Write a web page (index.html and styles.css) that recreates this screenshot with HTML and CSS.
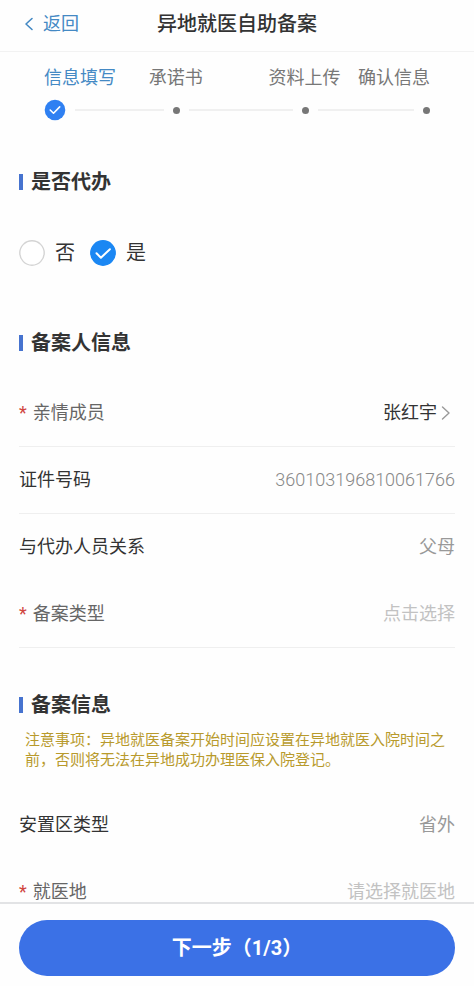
FILE: index.html
```html
<!DOCTYPE html>
<html lang="zh-CN">

<head>
    <meta charset="UTF-8">
    <meta name="viewport" content="width=device-width, initial-scale=1.0">
    <title>异地就医自助备案</title>
    <link rel="stylesheet" href="styles.css">
</head>

<body>
    <form class="page">
        <header class="header">
            <a class="back" href="#">
                <svg class="back-icon" viewBox="0 0 10 14" width="10" height="14" aria-hidden="true">
                    <path d="M8 1.5 2 7l6 5.5" />
                </svg>
                返回
            </a>
            <h1>异地就医自助备案</h1>
        </header>

        <main class="content">
            <div class="steps">
                <ol class="step-names">
                    <li class="active" aria-current="step">信息填写</li>
                    <li>承诺书</li>
                    <li>资料上传</li>
                    <li>确认信息</li>
                </ol>
                <div class="track" aria-hidden="true">
                    <svg class="track-check" viewBox="0 0 22 22" width="22" height="22">
                        <circle cx="11" cy="11" r="10.3" />
                        <path d="m6.2 11 3.3 3.2 6.2-6.3" />
                    </svg>
                    <span class="line"></span>
                    <span class="dot"></span>
                    <span class="line"></span>
                    <span class="dot"></span>
                    <span class="line"></span>
                    <span class="dot"></span>
                </div>
            </div>

            <section class="section">
                <h2 id="agentTitle">是否代办</h2>
                <div class="radios" role="radiogroup" aria-labelledby="agentTitle">
                    <label class="radio">
                        <input type="radio" name="agent" value="no">
                        <svg class="radio-icon" viewBox="0 0 26 26" width="26" height="26" aria-hidden="true">
                            <circle cx="13" cy="13" r="12.2" />
                            <path d="m6.5 13.2 4.4 4.5 9-8.5" />
                        </svg>
                        否
                    </label>
                    <label class="radio">
                        <input type="radio" name="agent" value="yes" checked>
                        <svg class="radio-icon" viewBox="0 0 26 26" width="26" height="26" aria-hidden="true">
                            <circle cx="13" cy="13" r="12.2" />
                            <path d="m6.5 13.2 4.4 4.5 9-8.5" />
                        </svg>
                        是
                    </label>
                </div>
            </section>

            <section class="section">
                <h2>备案人信息</h2>
                <div class="rows">
                    <div class="row line-below">
                        <label class="required" for="member">亲情成员</label>
                        <button class="value picked" type="button" id="member">张红宇
                            <svg class="more-icon" viewBox="0 0 10 16" width="10" height="16" aria-hidden="true">
                                <path d="m1.5 2 6.5 6-6.5 6" />
                            </svg>
                        </button>
                    </div>
                    <div class="row line-below">
                        <label for="idNumber">证件号码</label>
                        <output class="value number" id="idNumber">360103196810061766</output>
                    </div>
                    <div class="row">
                        <label for="relation">与代办人员关系</label>
                        <output class="value" id="relation">父母</output>
                    </div>
                    <div class="row line-below">
                        <label class="required" for="recordType">备案类型</label>
                        <button class="value empty" type="button" id="recordType">点击选择</button>
                    </div>
                </div>
            </section>

            <section class="section">
                <h2>备案信息</h2>
                <p class="note">注意事项：异地就医备案开始时间应设置在异地就医入院时间之前，否则将无法在异地成功办理医保入院登记。</p>
                <div class="rows">
                    <div class="row">
                        <label for="areaType">安置区类型</label>
                        <output class="value" id="areaType">省外</output>
                    </div>
                    <div class="row">
                        <label class="required" for="place">就医地</label>
                        <button class="value empty" type="button" id="place">请选择就医地</button>
                    </div>
                </div>
            </section>
        </main>

        <footer class="footer">
            <button class="next" type="submit">下一步（1/3）</button>
        </footer>
    </form>
</body>

</html>
```
FILE: styles.css
```css
* {
    box-sizing: border-box;
}

body {
    margin: 0;
    background-color: #fefefe;
    color: #333;
    font-family: Roboto, "Noto Sans CJK SC", sans-serif;
    font-size: 18px;
    line-height: 24px;
}

h1, h2, p, ol {
    margin: 0;
    padding: 0;
}

button {
    padding: 0;
    border: none;
    background: none;
    color: inherit;
    font: inherit;
    cursor: pointer;
}

svg {
    fill: none;
    stroke-linecap: round;
    stroke-linejoin: round;
}

.page {
    display: flex;
    flex-direction: column;
    height: 100vh;
}

/* Top bar */
.header {
    display: grid;
    grid-template-columns: 1fr auto 1fr;
    align-items: center;
    padding: 9px 24px 12px;
    border-bottom: 1px solid #f2f2f2;
}

.header h1 {
    font-size: 20px;
    font-weight: 500;
    line-height: 30px;
}

.back {
    display: flex;
    align-items: center;
    gap: 9px;
    color: #4489c4;
    text-decoration: none;
}

.back-icon {
    stroke: #4489c4;
    stroke-width: 1.6;
}

/* Scrolling part between top bar and button */
.content {
    flex: 1;
    min-height: 0;
    overflow-y: auto;
    scrollbar-width: none;
}

.steps {
    padding: 14px 44px 4px;
}

.step-names {
    display: grid;
    grid-template-columns: minmax(0, 11fr) 21fr 21fr minmax(0, 10fr);
    justify-items: center;
    list-style: none;
    color: #777;
    white-space: nowrap;
}

.step-names li:first-child {
    justify-self: start;
}

.step-names li:last-child {
    justify-self: end;
}

.step-names .active {
    color: #4489c4;
}

.track {
    display: grid;
    grid-template-columns: auto 14fr auto 16fr auto 15fr auto;
    align-items: center;
    margin-top: 9px;
}

.track-check circle {
    fill: #2f80f2;
}

.track-check path {
    stroke: #fff;
    stroke-width: 1.6;
}

.line {
    height: 2px;
    margin: 0 9px;
    background-color: #f0f0f0;
}

.dot {
    width: 7px;
    height: 7px;
    border-radius: 50%;
    background-color: #777;
}

/* Form sections */
.section {
    margin-top: 42px;
    padding: 0 19px;
}

.section h2 {
    display: flex;
    align-items: center;
    gap: 8px;
    font-size: 20px;
    font-weight: bold;
    line-height: 30px;
}

.section h2::before {
    content: "";
    width: 4px;
    height: 16px;
    background-color: #4673cf;
}

.radios {
    display: flex;
    align-items: center;
    gap: 15px;
    height: 67px;
    margin-top: 22px;
    font-size: 20px;
}

.radio {
    display: flex;
    align-items: center;
    gap: 10px;
}

.radio input {
    position: absolute;
    opacity: 0;
}

.radio-icon circle {
    fill: #fff;
    stroke: #d4d4d4;
    stroke-width: 1.4;
}

.radio-icon path {
    stroke: none;
    stroke-width: 2;
}

.radio input:checked + .radio-icon circle {
    fill: #1b87f3;
    stroke: #1b87f3;
}

.radio input:checked + .radio-icon path {
    stroke: #fff;
}

.rows {
    margin-top: 22px;
}

.row {
    display: flex;
    justify-content: space-between;
    align-items: center;
    height: 67px;
    border-bottom: 1px solid transparent;
}

.line-below {
    border-bottom-color: #efefef;
}

.required {
    color: #666;
}

.required::before {
    content: "*";
    margin-right: 6px;
    color: #d0453f;
}

.value {
    display: flex;
    align-items: center;
    color: #999;
}

.number {
    color: #888;
    font-weight: 300;
}

.picked {
    gap: 4px;
    padding-right: 4px;
    color: #333;
}

.more-icon {
    stroke: #999;
    stroke-width: 1.4;
}

.empty {
    color: #c2c2c2;
}

.note {
    margin-top: 10px;
    padding: 0 4px 0 6px;
    color: #b89a2c;
    font-size: 15px;
    line-height: 20px;
}

/* Bottom button */
.footer {
    padding: 16px 19px 10px;
    border-top: 2px solid #e2e3e5;
}

.next {
    width: 100%;
    height: 56px;
    border-radius: 28px;
    background-color: #3b71e6;
    color: #fff;
    font-size: 20px;
    font-weight: bold;
}
```
